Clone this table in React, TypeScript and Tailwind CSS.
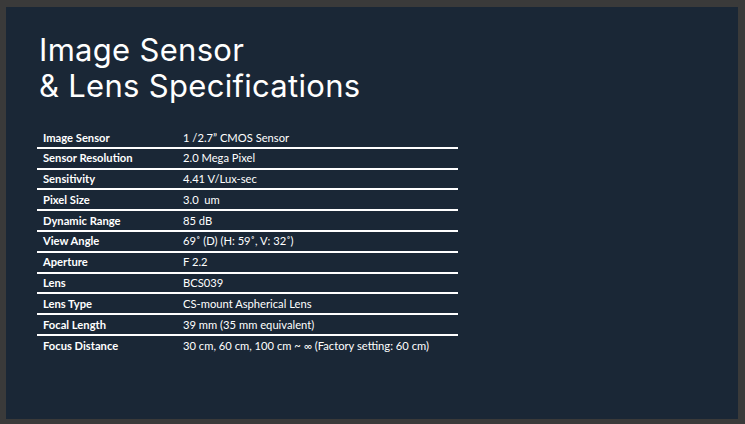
import React from "react";

const rows: [string, string][] = [
  ["Image Sensor", "1 /2.7\u201D CMOS Sensor"],
  ["Sensor Resolution", "2.0 Mega Pixel"],
  ["Sensitivity", "4.41 V/Lux-sec"],
  ["Pixel Size", "3.0  um"],
  ["Dynamic Range", "85 dB"],
  ["View Angle", "69\u02DA (D) (H: 59\u02DA, V: 32\u02DA)"],
  ["Aperture", "F 2.2"],
  ["Lens", "BCS039"],
  ["Lens Type", "CS-mount Aspherical Lens"],
  ["Focal Length", "39 mm (35 mm equivalent)"],
  ["Focus Distance", "30 cm, 60 cm, 100 cm ~ \u221E (Factory setting: 60 cm)"],
];

export default function App() {
  return (
    <div className="w-[745px] h-[424px] bg-[#3a3a3a] pt-[7px] pl-[6px] overflow-hidden">
      <div className="w-[732px] h-[412px] bg-[#1a2736] flex flex-col">
        <div
          className="pl-[33px] pt-[25px] text-white text-[31px] leading-[36px] tracking-[0.3px]"
          style={{ fontFamily: "Inter, sans-serif" }}
        >
          <div>Image Sensor</div>
          <div>&amp; Lens Specifications</div>
        </div>
        <div
          className="ml-[31px] mt-[24px] w-[421px] flex flex-col text-white text-[11.2px]"
          style={{ fontFamily: "Lato, sans-serif" }}
        >
          {rows.map(([k, v], i) => (
            <div
              key={k}
              className={
                "flex h-[20.8px] items-center pt-[1px] " +
                (i < rows.length - 1 ? "border-b-2 border-white" : "")
              }
            >
              <div className="w-[146px] pl-[6px] font-bold">{k}</div>
              <div className="flex-1 whitespace-pre">{v}</div>
            </div>
          ))}
        </div>
      </div>
    </div>
  );
}
